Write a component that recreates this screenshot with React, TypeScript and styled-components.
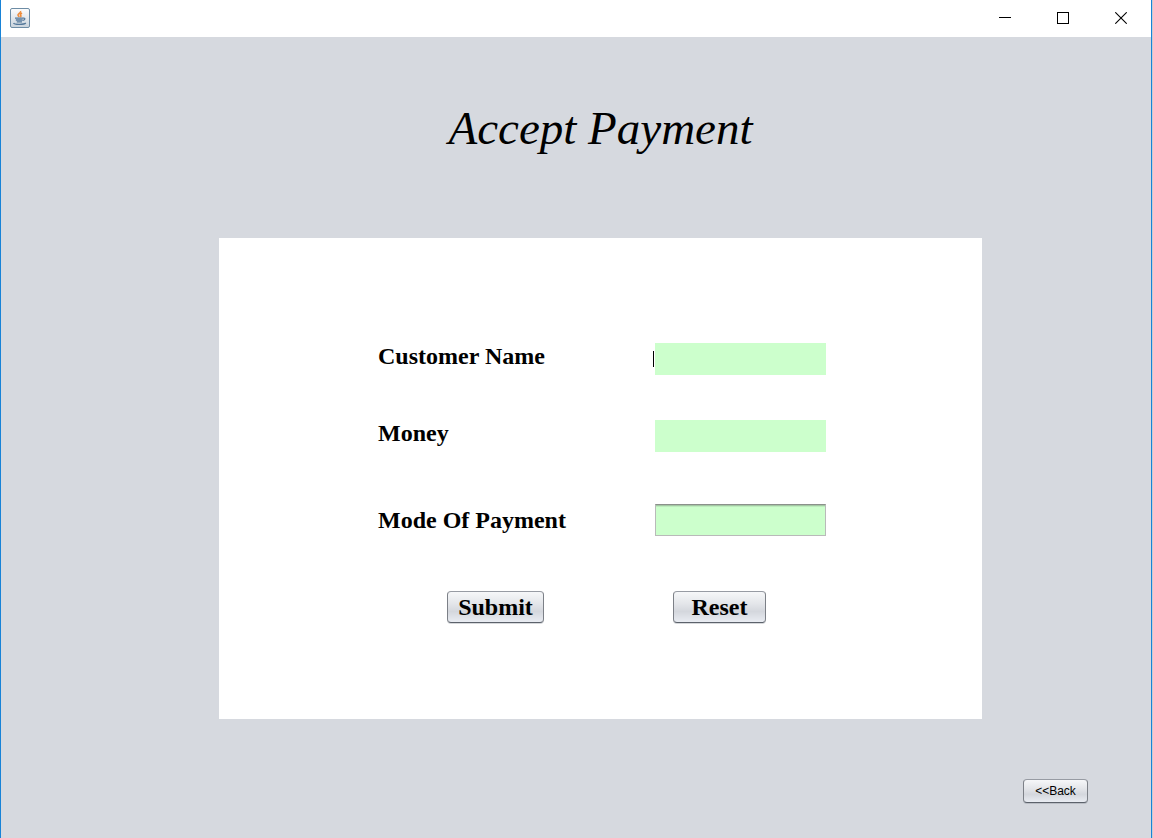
import React from "react";
import styled, { createGlobalStyle } from "styled-components";

const GlobalStyle = createGlobalStyle`
  *, *::before, *::after { box-sizing: border-box; }
  body { margin: 0; background: #c8ccd2; }
`;

const Frame = styled.div`
  display: flex;
  flex-direction: column;
  min-height: 100vh;
  margin-right: 1px;
  border: solid #1883d7;
  border-width: 0 1px;
  background: #d6d9df;
  color: #000;
  font-family: "Liberation Serif", "Times New Roman", serif;
`;

const TitleBar = styled.header`
  display: flex;
  align-items: center;
  justify-content: space-between;
  height: 37px;
  padding: 0 1px 1px 9px;
  background: #fff;
`;

const WindowControls = styled.div`
  display: flex;
`;

const WindowButton = styled.button`
  display: grid;
  place-items: center;
  width: 58px;
  height: 36px;
  padding: 0;
  border: 0;
  background: transparent;
`;

const Content = styled.main`
  display: flex;
  flex: 1;
  flex-direction: column;
  padding: 63px 63px 32px 218px;
`;

const Title = styled.h1`
  margin: 0 106px 82px 0;
  font-size: 47px;
  font-style: italic;
  font-weight: 400;
  line-height: 56px;
  text-align: center;
`;

const Panel = styled.form`
  margin-right: 106px;
  padding: 105px 156px 96px 159px;
  background: #fff;
`;

const Row = styled.div<{ $gap: number; $align?: string }>`
  display: flex;
  align-items: ${(p) => p.$align ?? "flex-start"};
  justify-content: space-between;
  height: 33px;
  margin-bottom: ${(p) => p.$gap}px;
`;

const Label = styled.label`
  font-size: 24px;
  font-weight: 700;
  line-height: 26px;
`;

const Field = styled.div<{ $caret?: boolean }>`
  position: relative;
  display: flex;
  width: 171px;

  &::before {
    content: "";
    display: ${(p) => (p.$caret ? "block" : "none")};
    position: absolute;
    top: 8px;
    left: -2px;
    width: 1px;
    height: 16px;
    background: #000;
  }
`;

const TextInput = styled.input<{ $sunken?: boolean }>`
  width: 100%;
  height: 32px;
  padding: 0 6px;
  border: ${(p) => (p.$sunken ? "1px solid #b9bab9" : "0")};
  border-top-color: #8b918b;
  border-radius: 0;
  outline: 0;
  background: #ccffcc;
  box-shadow: ${(p) => (p.$sunken ? "inset 0 1px #a3c7a3, inset 0 2px #bdecbd" : "none")};
  font: 16px "Liberation Serif", serif;
`;

const Actions = styled.div`
  display: flex;
  justify-content: space-between;
  padding: 0 60px 0 69px;
`;

const Button = styled.button`
  height: 32px;
  padding: 0;
  border: 1px solid #858990;
  border-color: #979ba3 #7c8087 #5c626b;
  border-radius: 4px;
  background: linear-gradient(#f6f7f9 0%, #e3e5e9 40%, #d4d7dd 65%, #e9ecf2 100%);
  box-shadow: 0 1px rgba(120, 125, 135, 0.3);
  color: #000;
  font: 700 24px/28px "Liberation Serif", "Times New Roman", serif;
`;

const SubmitButton = styled(Button)`
  width: 97px;
`;

const ResetButton = styled(Button)`
  width: 93px;
`;

const BackButton = styled(Button)`
  align-self: flex-end;
  width: 65px;
  height: 24px;
  margin-top: 60px;
  font: 12px/16px "Liberation Sans", Arial, sans-serif;
`;

const JavaIcon = () => (
  <svg width="20" height="20" viewBox="0 0 20 20" aria-hidden="true">
    <defs>
      <linearGradient id="tile" x1="0" y1="0" x2="0" y2="1">
        <stop offset="0" stopColor="#fdfdfd" />
        <stop offset="1" stopColor="#c9d3dc" />
      </linearGradient>
    </defs>
    <rect x="0.5" y="0.5" width="19" height="19" rx="1.5" fill="url(#tile)" stroke="#6d8ca5" />
    <path d="M10.6 3C11.4 5 7.2 5.8 8 7.4C8.4 8.2 9 8.4 9.2 9M12 5C10 6.2 10 6.8 10.8 7.6C11.3 8.2 10.8 8.8 10.2 9" fill="none" stroke="#ee8b3a" strokeWidth="1.5" />
    <path d="M5 10.2H13M5.8 12H12.6M6.8 13.8H12M13 10.2C15.6 9.7 15.4 12 12.8 12.4M3.6 15C4.2 16.8 14.2 16.7 15.8 15" fill="none" stroke="#54789a" strokeWidth="1.3" />
  </svg>
);

export default function App() {
  return (
    <>
      <GlobalStyle />
      <Frame>
        <TitleBar>
          <JavaIcon />
          <WindowControls>
            <WindowButton type="button" aria-label="Minimize">
              <svg width="12" height="12" shapeRendering="crispEdges">
                <path d="M0 5.5H12" stroke="#000" />
              </svg>
            </WindowButton>
            <WindowButton type="button" aria-label="Maximize">
              <svg width="12" height="12" shapeRendering="crispEdges">
                <rect x="0.5" y="0.5" width="11" height="11" fill="none" stroke="#000" />
              </svg>
            </WindowButton>
            <WindowButton type="button" aria-label="Close">
              <svg width="12" height="12">
                <path d="M0.3 0.3L11.7 11.7M11.7 0.3L0.3 11.7" stroke="#000" strokeWidth="1.1" />
              </svg>
            </WindowButton>
          </WindowControls>
        </TitleBar>
        <Content>
          <Title>Accept Payment</Title>
          <Panel onSubmit={(e: React.FormEvent) => e.preventDefault()}>
            <Row $gap={44}>
              <Label htmlFor="customer">Customer Name</Label>
              <Field $caret>
                <TextInput id="customer" type="text" />
              </Field>
            </Row>
            <Row $gap={50}>
              <Label htmlFor="money">Money</Label>
              <Field>
                <TextInput id="money" type="text" />
              </Field>
            </Row>
            <Row $gap={55} $align="center">
              <Label htmlFor="mode">Mode Of Payment</Label>
              <Field>
                <TextInput id="mode" type="text" $sunken />
              </Field>
            </Row>
            <Actions>
              <SubmitButton type="submit">Submit</SubmitButton>
              <ResetButton type="reset">Reset</ResetButton>
            </Actions>
          </Panel>
          <BackButton type="button">&lt;&lt;Back</BackButton>
        </Content>
      </Frame>
    </>
  );
}
